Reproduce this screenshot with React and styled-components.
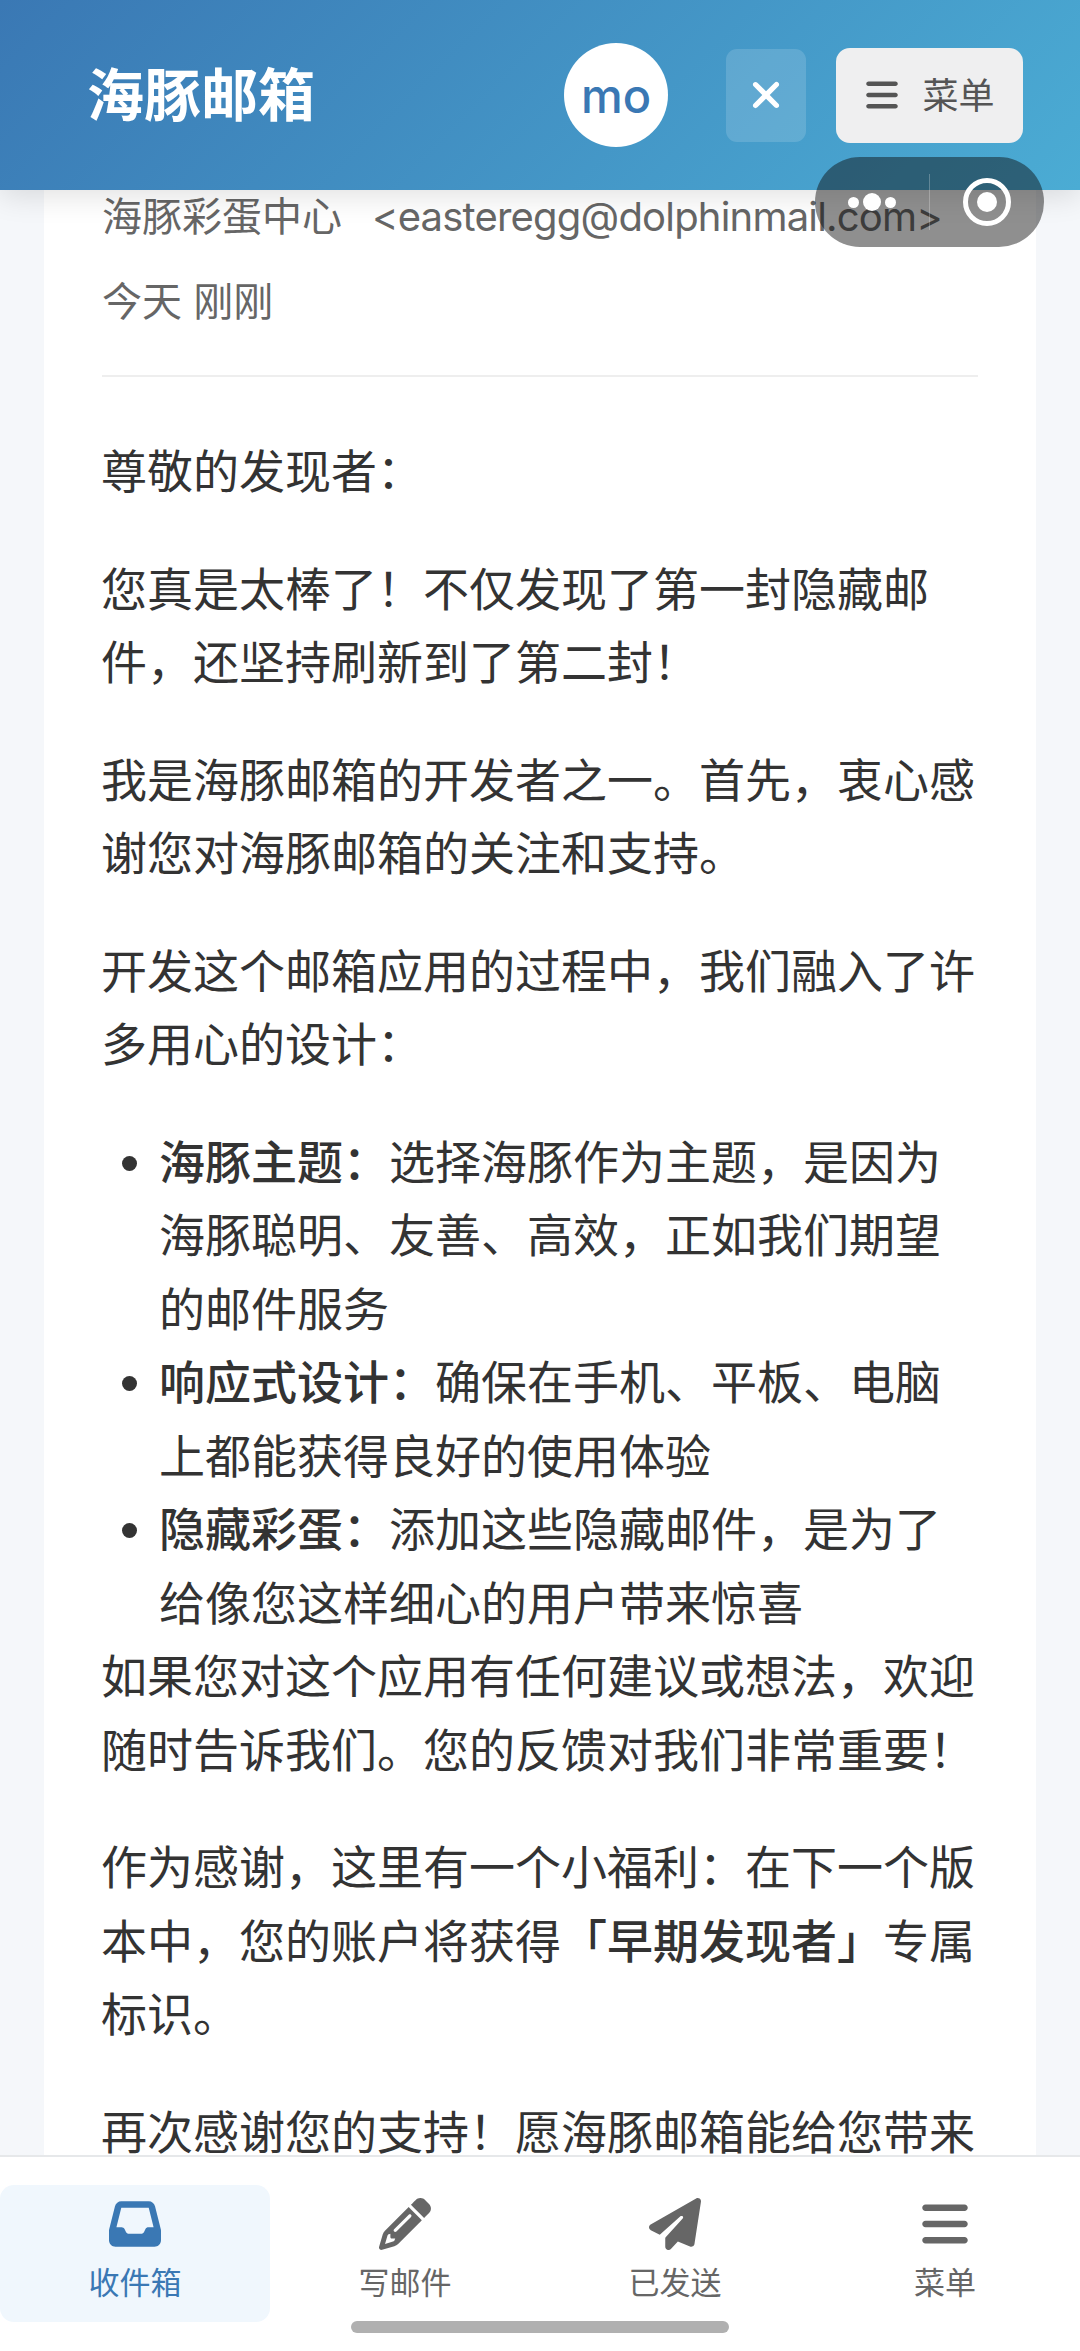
import React from "react";
import styled, { createGlobalStyle } from "styled-components";
import { FaBars, FaInbox, FaPaperPlane, FaPencil, FaXmark } from "react-icons/fa6";

const GlobalStyle = createGlobalStyle`
  html, body {
    margin: 0;
    padding: 0;
    background: #f5f7fa;
  }
  * {
    box-sizing: border-box;
  }
`;

const Page = styled.div`
  position: relative;
  width: 1080px;
  height: 2351px;
  display: flex;
  flex-direction: column;
  overflow: hidden;
  background: #f5f7fa;
  color: #333;
  font-family: Inter, "Noto Sans CJK SC", sans-serif;
`;

const Header = styled.header`
  position: relative;
  z-index: 2;
  flex: none;
  height: 190px;
  display: flex;
  align-items: center;
  padding: 0 57px 0 87px;
  background: linear-gradient(135deg, #3a78b4, #4bacd4);
  box-shadow: 0 6px 28px rgba(0, 0, 0, 0.12);
`;

const Logo = styled.h1`
  flex: 1;
  margin: 0 0 8px;
  font-size: 57px;
  font-weight: 700;
  color: #fff;
`;

const Avatar = styled.div`
  width: 104px;
  height: 104px;
  margin-right: 58px;
  border-radius: 50%;
  background: #fff;
  color: #3a78b4;
  display: flex;
  align-items: center;
  justify-content: center;
  font-size: 47px;
  font-weight: 500;
`;

const CloseButton = styled.div`
  width: 80px;
  height: 93px;
  margin-right: 30px;
  border-radius: 11px;
  background: rgba(255, 255, 255, 0.15);
  color: #fff;
  display: flex;
  align-items: center;
  justify-content: center;
  font-size: 42px;
`;

const MenuButton = styled.div`
  width: 187px;
  height: 95px;
  border-radius: 14px;
  background: #efeff0;
  color: #555;
  display: flex;
  align-items: center;
  justify-content: center;
  gap: 22px;
  font-size: 36px;
`;

const MenuLabel = styled.span`
  margin-bottom: 5px;
`;

const Capsule = styled.div`
  position: absolute;
  z-index: 3;
  top: 157px;
  left: 815px;
  width: 229px;
  height: 90px;
  border-radius: 45px;
  background: rgba(10, 10, 10, 0.46);
  display: flex;
  align-items: center;
`;

const CapsuleSide = styled.div`
  flex: 1;
  height: 100%;
  display: flex;
  align-items: center;
  justify-content: center;
  gap: 4px;
`;

const CapsuleRule = styled.div`
  width: 1px;
  height: 56px;
  background: rgba(255, 255, 255, 0.25);
`;

const Dot = styled.span`
  width: ${(p) => p.$size}px;
  height: ${(p) => p.$size}px;
  border-radius: 50%;
  background: #fff;
`;

const Ring = styled.span`
  width: 48px;
  height: 48px;
  border: 5px solid #fff;
  border-radius: 50%;
  display: flex;
  align-items: center;
  justify-content: center;
  &::after {
    content: "";
    width: 20px;
    height: 20px;
    border-radius: 50%;
    background: #fff;
  }
`;

const Main = styled.main`
  flex: 1;
  min-height: 0;
  overflow: hidden;
  padding: 0 44px;
`;

const Card = styled.article`
  background: #fff;
  padding: 0 58px;
`;

const MetaBlock = styled.div`
  height: 187px;
  border-bottom: 2px solid #eee;
  color: #666;
  font-size: 40px;
`;

const MetaLine = styled.div`
  height: 54px;
  line-height: 54px;
  margin-bottom: 31px;
  white-space: nowrap;
`;

const Sender = styled.span`
  margin-right: 30px;
`;

const Email = styled.span`
  letter-spacing: -0.8px;
`;

const Body = styled.div`
  margin-left: -1px;
  padding-top: 58px;
  font-size: 46px;
  line-height: 73.5px;
  strong {
    font-weight: 500;
  }
`;

const Para = styled.p`
  margin: 0 0 44px;
`;

const List = styled.ul`
  margin: 0;
  padding: 0 0 0 58px;
`;

const Item = styled.li`
  margin: 0;
`;

const BottomNav = styled.nav`
  position: relative;
  z-index: 2;
  flex: none;
  height: 196px;
  padding-top: 28px;
  background: #fff;
  border-top: 2px solid #e6e8ea;
  display: grid;
  grid-template-columns: repeat(4, 270px);
  align-items: start;
`;

const NavItem = styled.div`
  height: 137px;
  border-radius: 14px;
  background: ${(p) => (p.$active ? "#f0f7fd" : "transparent")};
  color: ${(p) => (p.$active ? "#3a78b4" : "#666")};
  display: flex;
  flex-direction: column;
  align-items: center;
  padding-top: 13px;
  font-size: 31px;
  svg {
    display: block;
    width: 52px;
    height: 52px;
  }
`;

const NavLabel = styled.span`
  margin-top: 12px;
  line-height: 42px;
`;

const HomeBar = styled.div`
  position: absolute;
  z-index: 3;
  left: 351px;
  bottom: 18px;
  width: 378px;
  height: 12px;
  border-radius: 6px;
  background: #b0b0b0;
`;

function NavEntry({ icon: Icon, label, active }) {
  return (
    <NavItem $active={active}>
      <Icon />
      <NavLabel>{label}</NavLabel>
    </NavItem>
  );
}

function App() {
  return (
    <Page>
      <GlobalStyle />
      <Header>
        <Logo>海豚邮箱</Logo>
        <Avatar>mo</Avatar>
        <CloseButton>
          <FaXmark />
        </CloseButton>
        <MenuButton>
          <FaBars />
          <MenuLabel>菜单</MenuLabel>
        </MenuButton>
      </Header>
      <Capsule>
        <CapsuleSide>
          <Dot $size={11} />
          <Dot $size={18} />
          <Dot $size={11} />
        </CapsuleSide>
        <CapsuleRule />
        <CapsuleSide>
          <Ring />
        </CapsuleSide>
      </Capsule>
      <Main>
        <Card>
          <MetaBlock>
            <MetaLine>
              <Sender>海豚彩蛋中心</Sender>
              <Email>{"<easteregg@dolphinmail.com>"}</Email>
            </MetaLine>
            <MetaLine>今天 刚刚</MetaLine>
          </MetaBlock>
          <Body>
            <Para>尊敬的发现者{"\uFF1A"}</Para>
            <Para>您真是太棒了{"\uFF01"}不仅发现了第一封隐藏邮件{"\uFF0C"}还坚持刷新到了第二封{"\uFF01"}</Para>
            <Para>我是海豚邮箱的开发者之一。首先{"\uFF0C"}衷心感谢您对海豚邮箱的关注和支持。</Para>
            <Para>开发这个邮箱应用的过程中{"\uFF0C"}我们融入了许多用心的设计{"\uFF1A"}</Para>
            <List>
              <Item>
                <strong>海豚主题{"\uFF1A"}</strong>选择海豚作为主题{"\uFF0C"}是因为海豚聪明、友善、高效{"\uFF0C"}正如我们期望的邮件服务
              </Item>
              <Item>
                <strong>响应式设计{"\uFF1A"}</strong>确保在手机、平板、电脑上都能获得良好的使用体验
              </Item>
              <Item>
                <strong>隐藏彩蛋{"\uFF1A"}</strong>添加这些隐藏邮件{"\uFF0C"}是为了给像您这样细心的用户带来惊喜
              </Item>
            </List>
            <Para>如果您对这个应用有任何建议或想法{"\uFF0C"}欢迎随时告诉我们。您的反馈对我们非常重要{"\uFF01"}</Para>
            <Para>
              作为感谢{"\uFF0C"}这里有一个小福利{"\uFF1A"}在下一个版本中{"\uFF0C"}您的账户将获得<strong>「早期发现者」</strong>专属标识。
            </Para>
            <Para>再次感谢您的支持{"\uFF01"}愿海豚邮箱能给您带来愉快的使用体验。</Para>
          </Body>
        </Card>
      </Main>
      <BottomNav>
        <NavEntry icon={FaInbox} label="收件箱" active />
        <NavEntry icon={FaPencil} label="写邮件" />
        <NavEntry icon={FaPaperPlane} label="已发送" />
        <NavEntry icon={FaBars} label="菜单" />
      </BottomNav>
      <HomeBar />
    </Page>
  );
}

export default App;
